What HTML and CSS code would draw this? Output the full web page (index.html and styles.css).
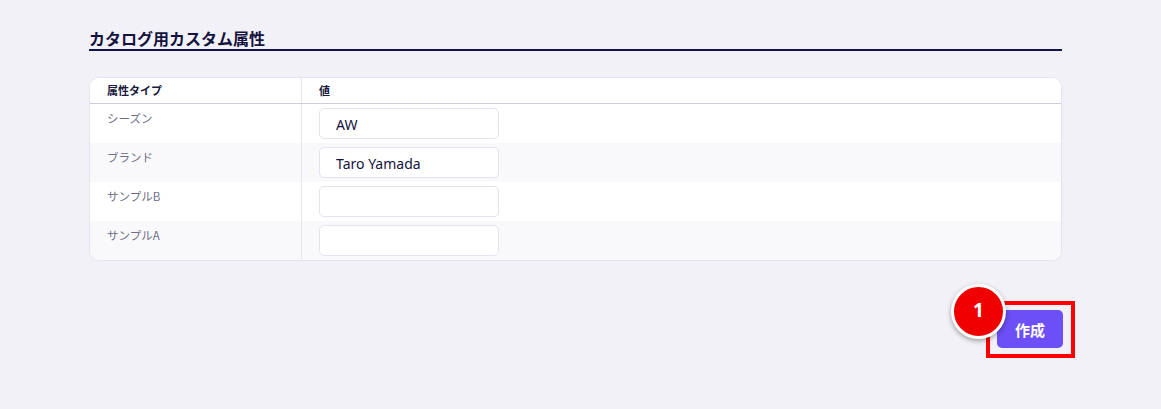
FILE: index.html
```html
<!DOCTYPE html>
<html lang="ja">
<head>
<meta charset="utf-8">
<title>カタログ用カスタム属性</title>
<link rel="stylesheet" href="styles.css">
</head>
<body>
<div class="page">
  <h2 class="section-title">カタログ用カスタム属性</h2>
  <div class="card">
    <div class="row head">
      <div class="cell key">属性タイプ</div>
      <div class="cell val">値</div>
    </div>
    <div class="row">
      <div class="cell key label">シーズン</div>
      <div class="cell val"><div class="input">AW</div></div>
    </div>
    <div class="row alt">
      <div class="cell key label">ブランド</div>
      <div class="cell val"><div class="input">Taro Yamada</div></div>
    </div>
    <div class="row">
      <div class="cell key label">サンプルB</div>
      <div class="cell val"><div class="input"></div></div>
    </div>
    <div class="row alt">
      <div class="cell key label">サンプルA</div>
      <div class="cell val"><div class="input"></div></div>
    </div>
  </div>
  <div class="actions">
    <div class="highlight">
      <span class="badge">1</span>
      <button class="btn">作成</button>
    </div>
  </div>
</div>
</body>
</html>
```
FILE: styles.css
```css
html, body {
  margin: 0;
  padding: 0;
  background: #f2f1f7;
  font-family: "Noto Sans", "Noto Sans CJK JP", sans-serif;
  color: #14133e;
}
.page {
  width: 986px;
  margin-left: 89px;
  padding-top: 28px;
}
.section-title {
  width: 973px;
  margin: 0;
  font-size: 16px;
  font-weight: 700;
  line-height: 21px;
  padding-bottom: 0;
  border-bottom: 2px solid #14134a;
  color: #14133e;
  font-family: "Noto Sans CJK JP", sans-serif;
}
.card {
  width: 971px;
  margin-top: 26px;
  background: #ffffff;
  border: 1px solid #e5e3f1;
  border-radius: 10px;
  overflow: hidden;
}
.row {
  display: flex;
  height: 39px;
}
.row.alt {
  background: #f9f9fc;
}
.row.head {
  height: 25px;
  border-bottom: 1px solid #d0ccdd;
  background: #ffffff;
}
.cell {
  box-sizing: border-box;
}
.cell.key {
  width: 212px;
  padding-left: 17px;
  border-right: 1px solid #e7e5f1;
}
.cell.val {
  flex: 1;
  padding-left: 17px;
  padding-top: 4px;
}
.head .cell {
  font-size: 11px;
  font-weight: 700;
  line-height: 25px;
  padding-top: 0;
  color: #1a193c;
  font-family: "Noto Sans CJK JP", sans-serif;
}
.label {
  font-size: 11.5px;
  color: #6e6d86;
  padding-top: 5px;
  line-height: 18px;
  font-family: "Noto Sans CJK JP", sans-serif;
}
.input {
  box-sizing: border-box;
  width: 180px;
  height: 31px;
  border: 1px solid #e4e2f0;
  border-radius: 5px;
  background: #ffffff;
  padding-left: 16px;
  font-size: 14px;
  line-height: 31px;
  color: #14133e;
}
.actions {
  display: flex;
  justify-content: flex-end;
  margin-top: 40px;
}
.highlight {
  position: relative;
  border: 4px solid #ff0000;
  padding: 5px 8px 6px 7px;
  display: flex;
}
.btn {
  width: 66px;
  height: 38px;
  border: none;
  border-radius: 5px;
  background: #6c4ff6;
  color: #ffffff;
  font-size: 15px;
  font-weight: 600;
  font-family: "Noto Sans CJK JP", sans-serif;
  padding: 0;
}
.badge {
  position: absolute;
  left: -39px;
  top: -21px;
  width: 49px;
  height: 49px;
  border: 3px solid #ffffff;
  border-radius: 50%;
  background: #f00000;
  color: #ffffff;
  font-size: 19px;
  font-weight: 700;
  line-height: 47px;
  text-align: center;
  font-family: "Noto Sans", sans-serif;
  box-shadow: 0 2px 5px rgba(0,0,0,0.35);
}
```
